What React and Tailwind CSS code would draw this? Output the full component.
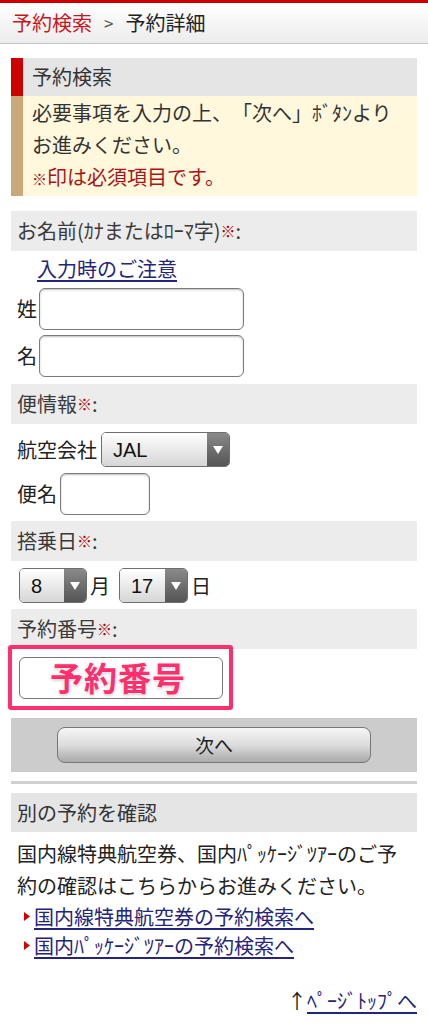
import { useState } from 'react';

const FONT = {
  fontFamily: '"Noto Sans CJK JP", "Noto Sans", sans-serif',
  textSpacingTrim: 'space-all',
};

const Req = () => <span className="text-[#b00000] text-[15px]">※</span>;

const SectionHead = ({ children }) => (
  <div className="h-[40px] bg-[#ececec] pl-[6px] flex items-center text-[20px] text-[#3a3a3a]">
    {children}
  </div>
);

const TextBox = ({ className }) => (
  <div
    className={`h-[42px] rounded-[6px] border border-[#7a7a7a] bg-white shadow-[inset_0_1px_2px_rgba(0,0,0,0.25)] ${className}`}
  />
);

const Select = ({ value, className }) => (
  <div
    className={`flex h-[35px] rounded-[5px] border border-[#6e6e6e] overflow-hidden ${className}`}
  >
    <div className="flex-1 flex items-center pl-[11px] bg-gradient-to-b from-white to-[#d6d6d6] text-[20px] text-[#111] font-['Liberation_Sans',sans-serif]">
      {value}
    </div>
    <div className="w-[22px] flex items-center justify-center bg-gradient-to-b from-[#8a8a8a] to-[#555]">
      <svg width="10" height="8" viewBox="0 0 10 8">
        <path d="M0 0 L10 0 L5 8 Z" fill="#fff" />
      </svg>
    </div>
  </div>
);

const Bullet = () => (
  <svg width="6" height="9" viewBox="0 0 6 9" className="mr-[4px] shrink-0">
    <path d="M0 0 L6 4.5 L0 9 Z" fill="#d40000" />
  </svg>
);

const App = () => {
  const [month] = useState('8');
  const [day] = useState('17');

  return (
    <div style={FONT} className="w-[428px] min-h-[1024px] bg-white text-[#222]">
      <div className="h-[3px] bg-[#cc0000]" />
      <div className="h-[41px] flex items-center pl-[12px] bg-gradient-to-b from-white to-[#ececec] border-b border-[#c4c4c4] text-[20px]">
        <span className="text-[#c8161d]">予約検索</span>
        <span className="text-[#555] mx-[12px] text-[17px]">&gt;</span>
        <span className="text-[#222]">予約詳細</span>
      </div>

      <div className="px-[11px] pt-[14px]">
        <div className="flex">
          <div className="w-[12px] bg-[#cc0000]" />
          <div className="flex-1 h-[38px] bg-[#e5e5e5] pl-[9px] flex items-center text-[20px] text-[#333]">
            予約検索
          </div>
        </div>
        <div className="flex">
          <div className="w-[12px] bg-[#c9a97a]" />
          <div className="flex-1 bg-[#fff8dc] pl-[9px] py-[1px] text-[20px] leading-[32px] text-[#333]">
            <div>必要事項を入力の上、「次へ」ﾎﾞﾀﾝより</div>
            <div>お進みください。</div>
            <div className="text-[#a8141a]">
              <span className="text-[15px]">※</span>印は必須項目です。
            </div>
          </div>
        </div>

        <div className="mt-[15px]">
          <SectionHead>
            お名前(ｶﾅまたはﾛｰﾏ字)
            <Req />:
          </SectionHead>
          <div className="pl-[26px] pt-[2px] leading-[32px] text-[20px]">
            <a className="text-[#24247a] underline underline-offset-[3px]">入力時のご注意</a>
          </div>
          <div className="flex items-center mt-[3px] pl-[6px] text-[20px]">
            <span className="w-[22px]">姓</span>
            <TextBox className="w-[205px]" />
          </div>
          <div className="flex items-center mt-[5px] pl-[6px] text-[20px]">
            <span className="w-[22px]">名</span>
            <TextBox className="w-[205px]" />
          </div>
        </div>

        <div className="mt-[7px]">
          <SectionHead>
            便情報
            <Req />:
          </SectionHead>
          <div className="flex items-center mt-[8px] pl-[6px] text-[20px]">
            <span className="w-[84px]">航空会社</span>
            <Select value="JAL" className="w-[129px]" />
          </div>
          <div className="flex items-center mt-[6px] pl-[6px] text-[20px]">
            <span className="w-[43px]">便名</span>
            <TextBox className="w-[90px]" />
          </div>
        </div>

        <div className="mt-[6px]">
          <SectionHead>
            搭乗日
            <Req />:
          </SectionHead>
          <div className="flex items-center mt-[7px] pl-[8px] text-[20px]">
            <Select value={month} className="w-[68px]" />
            <span className="ml-[3px] mr-[9px]">月</span>
            <Select value={day} className="w-[69px]" />
            <span className="ml-[3px]">日</span>
          </div>
        </div>

        <div className="mt-[6px]">
          <SectionHead>
            予約番号
            <Req />:
          </SectionHead>
          <div className="-mt-[4px] ml-[-3px] w-[225px] h-[65px] border-[4px] border-[#ff2f6e] rounded-[3px] flex items-center pl-[7px]">
            <div className="w-[204px] h-[42px] rounded-[6px] border border-[#777] bg-white flex items-center pl-[30px]">
              <span className="text-[#ff2f6e] text-[33px] font-bold tracking-[1px] [text-shadow:0_0_2px_#fff,0_0_3px_#fff,0_1px_3px_rgba(0,0,0,0.35)]">
                予約番号
              </span>
            </div>
          </div>
        </div>

        <div className="mt-[8px] h-[54px] bg-[#cccccc] flex items-center justify-center">
          <div className="w-[314px] h-[36px] rounded-[8px] border border-[#777] bg-gradient-to-b from-[#f6f6f6] via-[#dcdcdc] to-[#aaa] flex items-center justify-center text-[19px] text-[#222]">
            次へ
          </div>
        </div>

        <div className="mt-[9px] h-[3px] bg-[#d0d0d0]" />

        <div className="mt-[9px] h-[39px] bg-[#e5e5e5] pl-[6px] flex items-center text-[20px] text-[#333]">
          別の予約を確認
        </div>
        <div className="pl-[6px] pt-[6px] text-[20px] leading-[32px] text-[#222]">
          <div>国内線特典航空券、国内ﾊﾟｯｹｰｼﾞﾂｱｰのご予</div>
          <div>約の確認はこちらからお進みください。</div>
        </div>
        <div className="pl-[13px] text-[20px] leading-[29px]">
          <div className="flex items-center">
            <Bullet />
            <a className="text-[#24247a] underline underline-offset-[3px]">国内線特典航空券の予約検索へ</a>
          </div>
          <div className="flex items-center">
            <Bullet />
            <a className="text-[#24247a] underline underline-offset-[3px]">国内ﾊﾟｯｹｰｼﾞﾂｱｰの予約検索へ</a>
          </div>
        </div>

        <div className="mt-[27px] flex justify-end text-[20px] leading-[28px]">
          <span className="text-[#222]">↑</span>
          <a className="text-[#24247a] underline underline-offset-[3px]">ﾍﾟｰｼﾞﾄｯﾌﾟへ</a>
        </div>
      </div>
    </div>
  );
};

export default App;
